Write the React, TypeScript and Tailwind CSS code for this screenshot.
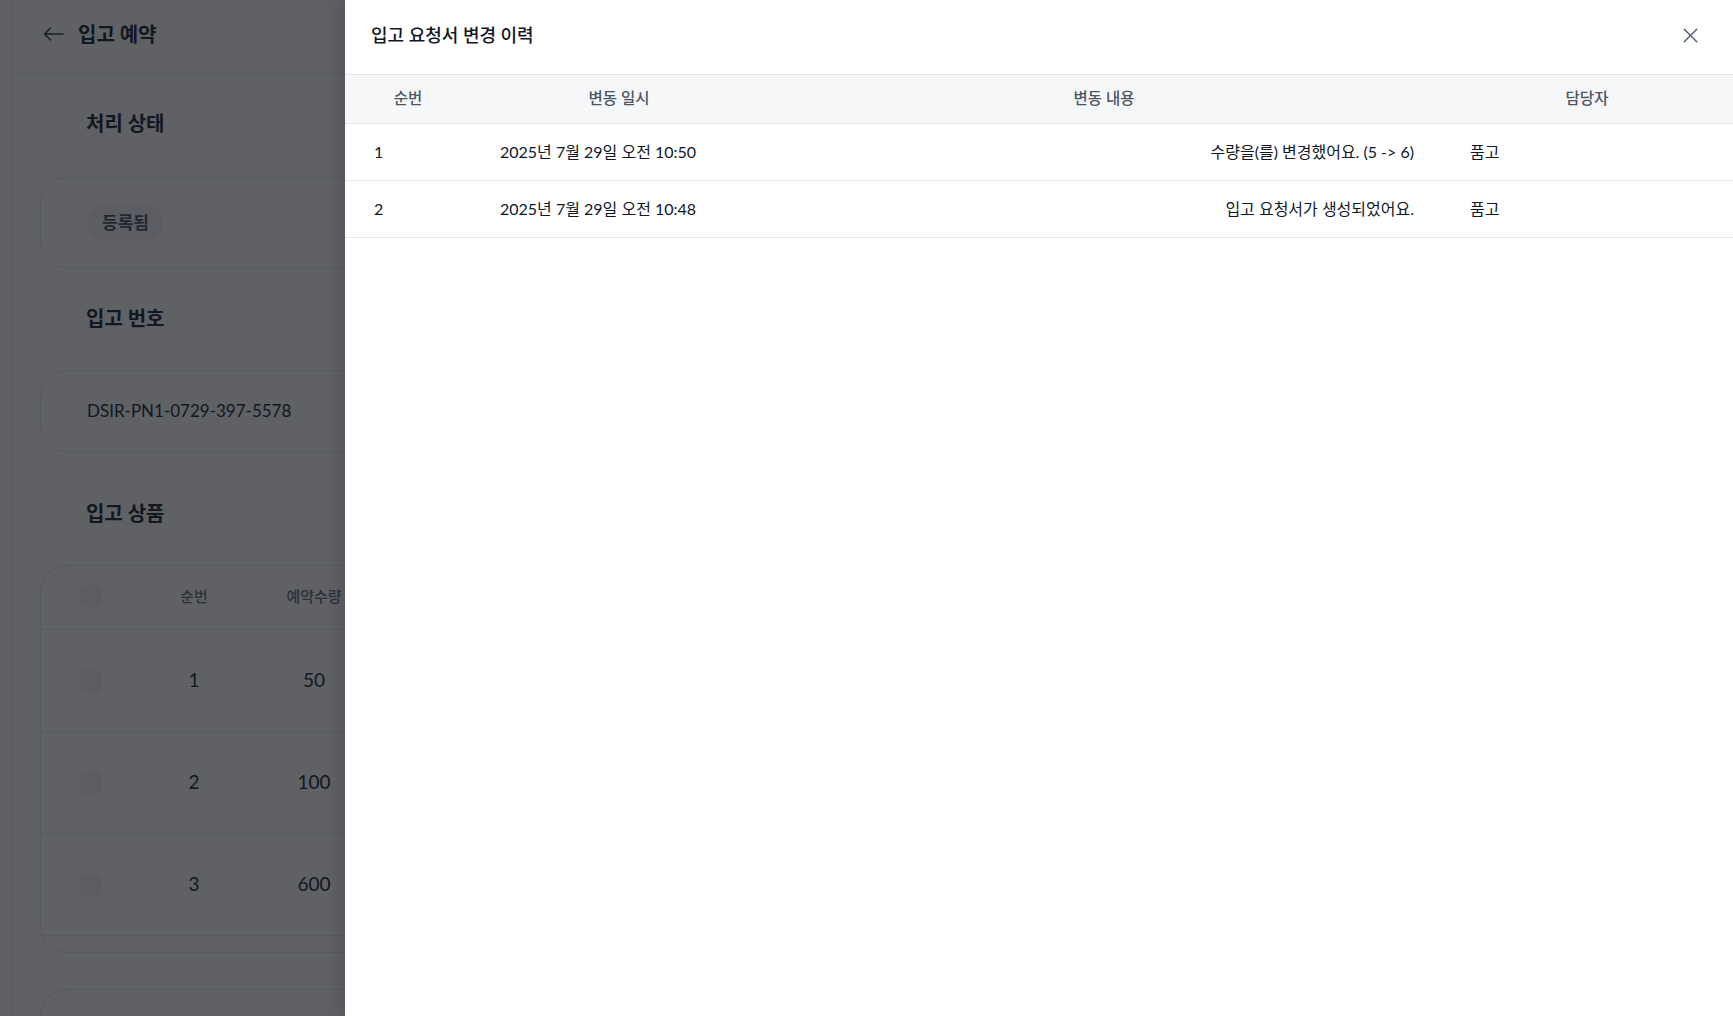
import { X } from "lucide-react"

type HistoryRow = {
  no: number
  changedAt: string
  note: string
  manager: string
}

const history: HistoryRow[] = [
  { no: 1, changedAt: "2025년 7월 29일 오전 10:50", note: "수량을(를) 변경했어요. (5 -> 6)", manager: "품고" },
  { no: 2, changedAt: "2025년 7월 29일 오전 10:48", note: "입고 요청서가 생성되었어요.", manager: "품고" },
]

const items = [
  { no: 1, qty: 50 },
  { no: 2, qty: 100 },
  { no: 3, qty: 600 },
]

function SectionTitle({ children }: { children: React.ReactNode }) {
  return <div className="pl-[46px] text-[20px] font-bold leading-[26px] text-gray-800">{children}</div>
}

function ReservationPage() {
  return (
    <div className="ml-[11px] min-h-screen border-l border-gray-200 bg-white">
      {/* Header */}
      <div className="flex h-[74px] items-center gap-[14px] border-b border-gray-200 pb-[6px] pl-[31px]">
        <svg width="21" height="14" viewBox="0 0 21 14" fill="none" stroke="currentColor" strokeWidth="1.5" className="text-gray-700">
          <path d="M20 7H1.5M7.5 1L1.5 7l6 6" strokeLinecap="round" strokeLinejoin="round" />
        </svg>
        <div className="text-[20px] font-bold text-gray-800">입고 예약</div>
      </div>

      <div className="pl-[28px] pt-[36px]">
        <SectionTitle>처리 상태</SectionTitle>
        <div className="mt-[41px] flex h-[91px] items-center rounded-[26px] border border-gray-200 pl-[47px]">
          <span className="rounded-full bg-gray-100 px-[14px] py-[5px] text-[17px] font-bold text-gray-600">등록됨</span>
        </div>

        <div className="mt-[37px]">
          <SectionTitle>입고 번호</SectionTitle>
        </div>
        <div className="mt-[39px] flex h-[82px] items-center rounded-[26px] border border-gray-200 pl-[46px] text-[17px] text-gray-800">
          DSIR-PN1-0729-397-5578
        </div>

        <div className="mt-[48px]">
          <SectionTitle>입고 상품</SectionTitle>
        </div>
        <div className="mt-[39px] h-[388px] rounded-[26px] border border-gray-200">
          <div className="grid h-[64px] grid-cols-[100px_106px_134px_1fr] items-center border-b border-gray-200 pb-[3px] text-[15px] font-medium text-gray-500">
            <div className="flex justify-center">
              <span className="h-[22px] w-[22px] rounded-[5px] bg-gray-100" />
            </div>
            <div className="text-center">순번</div>
            <div className="text-center">예약수량</div>
            <div />
          </div>
          {items.map((it) => (
            <div
              key={it.no}
              className="grid h-[102px] grid-cols-[100px_106px_134px_1fr] items-center border-b border-gray-200 text-[19px] text-gray-800"
            >
              <div className="flex justify-center">
                <span className="h-[22px] w-[22px] rounded-[5px] bg-gray-100" />
              </div>
              <div className="text-center">{it.no}</div>
              <div className="text-center">{it.qty}</div>
              <div />
            </div>
          ))}
        </div>

        <div className="mt-[36px] h-[120px] rounded-[26px] border border-gray-200" />
      </div>
    </div>
  )
}

function HistoryDrawer() {
  return (
    <div className="absolute inset-y-0 right-0 flex w-[1388px] flex-col bg-white shadow-[-6px_0_16px_rgba(0,0,0,0.12)]">
      <div className="flex h-[74px] shrink-0 items-center justify-between pb-[4px] pl-[26px] pr-[30px]">
        <div className="text-[18px] font-medium text-gray-900">입고 요청서 변경 이력</div>
        <X size={25} strokeWidth={1.3} className="text-gray-600" />
      </div>

      {/* Table header */}
      <div className="grid h-[50px] grid-cols-[126px_296px_674px_1fr] items-center border-y border-gray-200 bg-[#f6f7f8] text-[15.5px] font-medium text-gray-600">
        <div className="text-center">순번</div>
        <div className="text-center">변동 일시</div>
        <div className="text-center">변동 내용</div>
        <div className="text-center">담당자</div>
      </div>

      {/* Rows */}
      {history.map((row) => (
        <div
          key={row.no}
          className="grid h-[57px] grid-cols-[126px_296px_674px_1fr] items-center border-b border-gray-200 pb-[1px] text-[16px] text-gray-900"
        >
          <div className="pl-[29px]">{row.no}</div>
          <div className="pl-[29px]">{row.changedAt}</div>
          <div className="pr-[27px] text-right">{row.note}</div>
          <div className="pl-[29px]">{row.manager}</div>
        </div>
      ))}
    </div>
  )
}

export default function App() {
  return (
    <div className="relative h-[1016px] w-full overflow-hidden bg-white font-[Lato,'Noto_Sans_CJK_KR',sans-serif]">
      <ReservationPage />
      {/* dim overlay */}
      <div className="absolute inset-0 bg-[rgba(12,15,22,0.66)]" />
      <HistoryDrawer />
    </div>
  )
}
